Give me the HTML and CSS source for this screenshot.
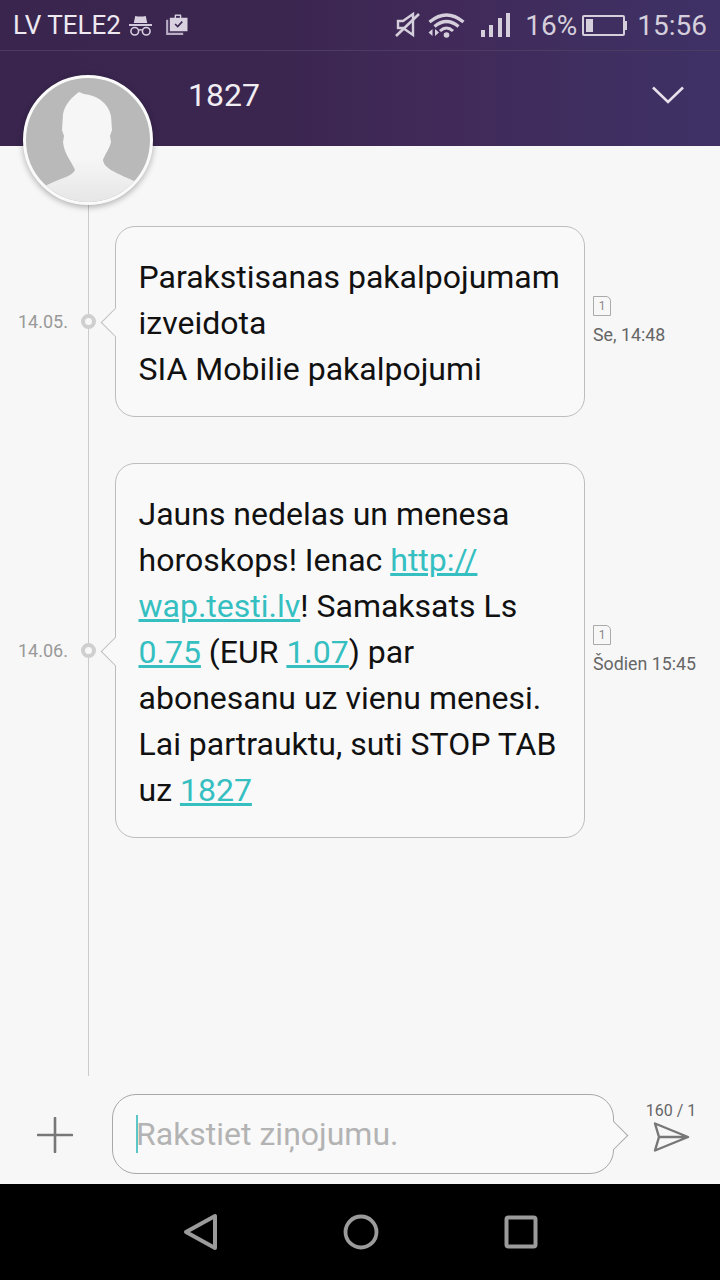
FILE: index.html
```html
<!DOCTYPE html>
<html lang="lv">
<head>
    <meta charset="UTF-8">
    <meta name="viewport" content="width=device-width, initial-scale=1.0">
    <title>1827</title>
    <link rel="stylesheet" href="styles.css">
</head>
<body>
    <div class="topArea">
        <div class="statusBar">
            <div class="statusLeft">
                <span class="carrier">LV TELE2</span>
                <svg class="spyIcon" viewBox="0 0 24 22">
                    <path d="M5 9 L6.500 1.500 Q12 3 17.500 1.500 L19 9 Z" fill="#d9d1e0"/>
                    <rect x="0" y="10" width="24" height="2" fill="#d9d1e0"/>
                    <circle cx="6" cy="17.500" r="4" fill="none" stroke="#d9d1e0" stroke-width="1.600"/>
                    <circle cx="18" cy="17.500" r="4" fill="none" stroke="#d9d1e0" stroke-width="1.600"/>
                    <path d="M10 16.500 Q12 15.500 14 16.500" fill="none" stroke="#d9d1e0" stroke-width="1.400"/>
                </svg>
                <svg class="bagIcon" viewBox="0 0 23 22">
                    <path d="M1.200 6 V20.800 H18" fill="none" stroke="#b9adc6" stroke-width="2.200"/>
                    <path d="M4 4 H9 V1.500 Q9 0.500 10 0.500 H15 Q16 0.500 16 1.500 V4 H22.500 V18 H4 Z" fill="#d9d1e0"/>
                    <rect x="10.500" y="2" width="4" height="2" fill="#3b2751"/>
                    <path d="M9.500 10.500 L12.200 13.200 L17 8" fill="none" stroke="#3b2751" stroke-width="1.700"/>
                </svg>
            </div>
            <div class="statusRight">
                <svg class="muteIcon" viewBox="0 0 25 26">
                    <path d="M3 9 H8 L18 2 V23 L8 16 H3 Z" fill="none" stroke="#d5cfdc" stroke-width="2.400"/>
                    <path d="M1 24 L24 2" stroke="#d5cfdc" stroke-width="2.600"/>
                </svg>
                <svg class="wifiIcon" viewBox="0 0 37 25">
                    <path d="M1.500 9 Q18.500 -5 35.500 9" fill="none" stroke="#d5cfdc" stroke-width="3.200"/>
                    <path d="M6.500 13.500 Q18.500 3.500 30.500 13.500" fill="none" stroke="#d5cfdc" stroke-width="3.200"/>
                    <path d="M12 18 Q18.500 12 25 18" fill="none" stroke="#d5cfdc" stroke-width="3"/>
                    <circle cx="18.500" cy="22" r="2.800" fill="#d5cfdc"/>
                    <path d="M4.500 16 V23 L0.500 19.500 Z M7 16 V23 L11 19.500 Z" fill="#d5cfdc"/>
                </svg>
                <div class="signal">
                    <span class="bar1"></span>
                    <span class="bar2"></span>
                    <span class="bar3"></span>
                    <span class="bar4"></span>
                </div>
                <span class="percent">16%</span>
                <div class="battery"><span class="batteryLevel"></span></div>
                <span class="clock">15:56</span>
            </div>
        </div>

        <header class="chatHeader">
            <h1>1827</h1>
            <svg class="chevron" viewBox="0 0 32 18">
                <path d="M1 1.500 L16 16 L31 1.500" fill="none" stroke="#e6e1ea" stroke-width="2.600"/>
            </svg>
        </header>
    </div>

    <div class="avatar">
        <svg viewBox="0 0 124 124">
            <defs>
                <linearGradient id="bust" x1="0" y1="0" x2="0" y2="1">
                    <stop offset="0.600" stop-color="#f6f6f6"/>
                    <stop offset="1" stop-color="#e6e6e6"/>
                </linearGradient>
            </defs>
            <path fill="url(#bust)" d="M53 14 L58 16 C70 17 82 24 85 38 L86 52 L84 58 L85 64 C84 70 79 76 77 82 C78 90 88 94 108 103 L124 124 L0 124 L21 107 C34 100 46 99 49 92 C46 84 38 76 37 64 L38 58 L36 52 L37 36 C39 26 46 19 53 14 Z"/>
        </svg>
    </div>

    <main class="thread">
        <div class="timeline"></div>

        <div class="message">
            <span class="msgDate">14.05.</span>
            <span class="dot"></span>
            <div class="bubble">
                Parakstisanas pakalpojumam<br>
                izveidota<br>
                SIA Mobilie pakalpojumi
            </div>
            <div class="msgMeta">
                <span class="smsCount">1</span>
                <span class="msgTime">Se, 14:48</span>
            </div>
        </div>

        <div class="message">
            <span class="msgDate">14.06.</span>
            <span class="dot"></span>
            <div class="bubble">
                Jauns nedelas un menesa<br>
                horoskops! Ienac <a href="#">http://</a><br>
                <a href="#">wap.testi.lv</a>! Samaksats Ls<br>
                <a href="#">0.75</a> (EUR <a href="#">1.07</a>) par<br>
                abonesanu uz vienu menesi.<br>
                Lai partrauktu, suti STOP TAB<br>
                uz <a href="#">1827</a>
            </div>
            <div class="msgMeta">
                <span class="smsCount">1</span>
                <span class="msgTime">Šodien 15:45</span>
            </div>
        </div>
    </main>

    <div class="composer">
        <svg class="plusIcon" viewBox="0 0 36 36">
            <path d="M18 1 V35 M1 18 H35" stroke="#777" stroke-width="2.600" stroke-linecap="round"/>
        </svg>
        <div class="inputBox">
            <span class="caret"></span>
            <span class="placeholder">Rakstiet ziņojumu.</span>
        </div>
        <div class="sendArea">
            <span class="counter">160 / 1</span>
            <svg class="sendIcon" viewBox="0 0 37 30">
                <path d="M2 1.500 L35 15 L2 28.500 L6 15 Z M6 15 H35" fill="none" stroke="#777" stroke-width="2.400" stroke-linejoin="round"/>
            </svg>
        </div>
    </div>

    <nav class="navBar">
        <svg viewBox="0 0 36 38">
            <path d="M3 19 L32 3 V35 Z" fill="none" stroke="#9b9b9b" stroke-width="4" stroke-linejoin="round"/>
        </svg>
        <svg viewBox="0 0 36 38">
            <circle cx="18" cy="19" r="15.500" fill="none" stroke="#9b9b9b" stroke-width="3.800"/>
        </svg>
        <svg viewBox="0 0 36 38">
            <rect x="3.500" y="4.500" width="29" height="29" rx="2" fill="none" stroke="#9b9b9b" stroke-width="4"/>
        </svg>
    </nav>
</body>
</html>
```

FILE: styles.css
```css
* {
    box-sizing: border-box;
}

html, body {
    height: 100%;
}

body {
    position: relative;
    display: flex;
    flex-direction: column;
    margin: 0;
    height: 1280px;
    overflow: hidden;
    font-family: Roboto, "Noto Sans", sans-serif;
    background-color: #f7f7f7;
    color: #111;
}

/* status bar and title share one gradient */
.topArea {
    background: linear-gradient(90deg, #39254e 0%, #3b2650 40%, #412a59 62%, #3f2e5f 80%, #3f3166 100%);
}

.statusBar {
    display: flex;
    justify-content: space-between;
    align-items: center;
    height: 51px;
    padding: 0 13px 0 13px;
    border-bottom: 1px solid #4e3b64;
}

.statusLeft, .statusRight {
    display: flex;
    align-items: center;
}

.carrier {
    font-size: 26px;
    color: #eee9f1;
}

.spyIcon {
    width: 23px;
    height: 22px;
    margin-left: 8px;
}

.bagIcon {
    width: 22px;
    height: 21px;
    margin-left: 14px;
    margin-bottom: 2px;
}

.statusRight {
    color: #d5cfdc;
    font-size: 28px;
}

.muteIcon {
    width: 25px;
    height: 26px;
}

.wifiIcon {
    width: 37px;
    height: 25px;
    margin-left: 8px;
}

.signal {
    display: flex;
    align-items: flex-end;
    gap: 4.500px;
    height: 24px;
    margin-left: 16px;
}

.signal span {
    width: 4px;
    background-color: #d5cfdc;
}

.bar1 { height: 7px; }
.bar2 { height: 12px; }
.bar3 { height: 19px; }
.bar4 { height: 24px; }

.percent {
    margin-left: 15px;
}

.battery {
    position: relative;
    width: 43px;
    height: 21px;
    margin-left: 5px;
    margin-right: 2px;
    padding: 2px;
    border: 2px solid #d5cfdc;
    border-radius: 2px;
}

.battery::after {
    content: "";
    position: absolute;
    right: -4px;
    top: 4px;
    width: 2px;
    height: 9px;
    background-color: #d5cfdc;
}

.batteryLevel {
    display: block;
    width: 7px;
    height: 100%;
    background-color: #d5cfdc;
}

.clock {
    margin-left: 10px;
}

.chatHeader {
    display: flex;
    justify-content: space-between;
    align-items: center;
    height: 95px;
    padding: 0 36px 7px 188px;
}

.chatHeader h1 {
    margin: 0;
    font-size: 32px;
    font-weight: 400;
    color: #f1eef3;
}

.chevron {
    width: 32px;
    height: 18px;
}

/* contact photo hangs over the header edge */
.avatar {
    position: absolute;
    left: 23px;
    top: 75px;
    z-index: 2;
    width: 130px;
    height: 130px;
    border: 3px solid #fafafa;
    border-radius: 50%;
    background-color: #b9b9b9;
    box-shadow: 0 2px 6px rgba(0, 0, 0, 0.3);
    overflow: hidden;
}

.avatar svg {
    display: block;
    width: 100%;
    height: 100%;
}

.thread {
    position: relative;
    flex: 1;
    padding-top: 80px;
}

.timeline {
    position: absolute;
    left: 88px;
    top: 59px;
    bottom: 0;
    width: 1px;
    background-color: #cbcbcb;
}

.message {
    position: relative;
    display: flex;
    align-items: center;
    margin-bottom: 46px;
    padding-left: 18px;
}

.msgDate {
    width: 63px;
    font-size: 18px;
    color: #999;
}

.dot {
    position: relative;
    width: 15px;
    height: 15px;
    margin-right: 19px;
    border: 4.500px solid #cfcfcf;
    border-radius: 50%;
    background-color: #f7f7f7;
}

.bubble {
    position: relative;
    width: 470px;
    padding: 27px 0 24px 22.500px;
    border: 1px solid #bdbdbd;
    border-radius: 20px;
    background-color: #f9f9f9;
    font-size: 32px;
    line-height: 46px;
}

/* little tail pointing at the timeline dot */
.bubble::before {
    content: "";
    position: absolute;
    left: -11px;
    top: 50%;
    width: 20px;
    height: 20px;
    margin-top: -10px;
    border-left: 1px solid #bdbdbd;
    border-bottom: 1px solid #bdbdbd;
    background-color: #f9f9f9;
    transform: rotate(45deg);
}

.bubble a {
    color: #35bfc1;
}

.msgMeta {
    display: flex;
    flex-direction: column;
    align-items: flex-start;
    gap: 8px;
    margin-left: 8px;
    margin-bottom: 2px;
}

.smsCount {
    width: 18px;
    height: 20px;
    border: 1px solid #aaa;
    border-top-right-radius: 5px;
    font-size: 12px;
    line-height: 18px;
    text-align: center;
    color: #888;
}

.msgTime {
    font-size: 17.800px;
    color: #666;
}

.composer {
    display: flex;
    height: 108px;
    padding: 18px 0 10px 37px;
}

.plusIcon {
    width: 36px;
    height: 36px;
    margin-top: 23px;
}

.inputBox {
    position: relative;
    display: flex;
    align-items: center;
    width: 502px;
    height: 80px;
    margin-left: 39px;
    padding-left: 23px;
    border: 1px solid #a8a8a8;
    border-radius: 24px;
    background-color: #f9f9f9;
}

.inputBox::after {
    content: "";
    position: absolute;
    right: -11px;
    top: 50%;
    width: 20px;
    height: 20px;
    margin-top: -9px;
    border-right: 1px solid #a8a8a8;
    border-top: 1px solid #a8a8a8;
    background-color: #f9f9f9;
    transform: rotate(45deg);
}

.caret {
    width: 2px;
    height: 38px;
    margin-right: -2px;
    background-color: #5cc6c8;
}

.placeholder {
    font-size: 32px;
    color: #b3b3b3;
}

.sendArea {
    display: flex;
    flex-direction: column;
    align-items: center;
    width: 50px;
    margin-left: 32px;
    margin-top: 7px;
}

.counter {
    font-size: 16px;
    color: #666;
    white-space: nowrap;
}

.sendIcon {
    width: 37px;
    height: 30px;
    margin-top: 2px;
}

.navBar {
    display: flex;
    justify-content: center;
    align-items: center;
    gap: 124px;
    height: 96px;
    padding-left: 2px;
    background-color: #000;
}

.navBar svg {
    width: 36px;
    height: 38px;
}
```
